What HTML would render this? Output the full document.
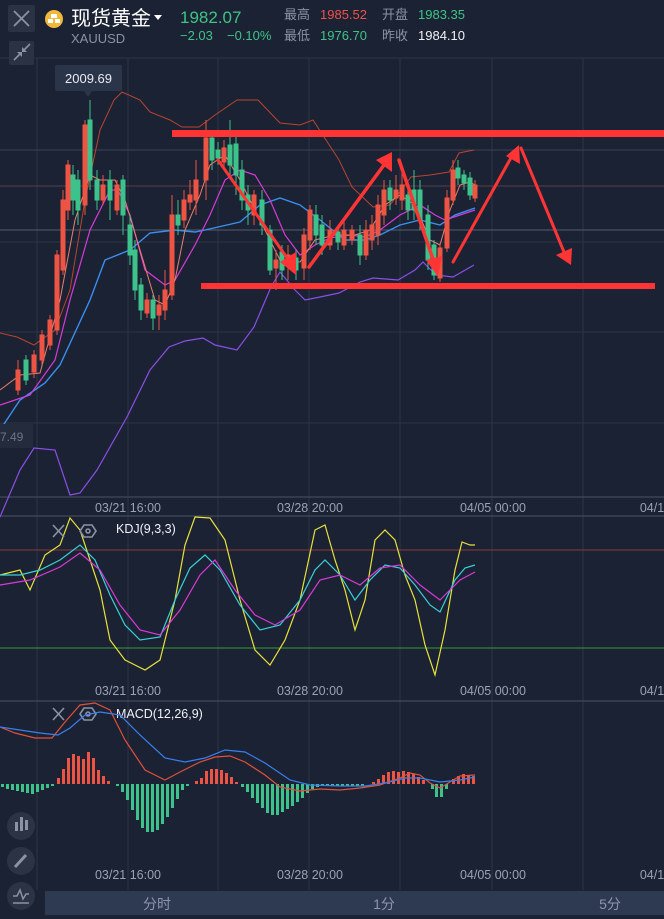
<!DOCTYPE html>
<html><head><meta charset="utf-8">
<style>
html,body{margin:0;padding:0;background:#1b2233;width:664px;height:919px;overflow:hidden;font-family:"Liberation Sans","Noto Sans CJK SC",sans-serif;}
svg{position:absolute;left:0;top:0}
</style></head><body>
<svg width="664" height="919" viewBox="0 0 664 919" xmlns="http://www.w3.org/2000/svg" font-family="Liberation Sans, Noto Sans CJK SC, sans-serif">
<rect width="664" height="919" fill="#1b2233"/>
<!-- grid -->
<g stroke="#2c3446" stroke-width="1">
<line x1="37" y1="58" x2="37" y2="890"/><line x1="128" y1="58" x2="128" y2="890"/><line x1="218" y1="58" x2="218" y2="890"/><line x1="309" y1="58" x2="309" y2="890"/><line x1="400" y1="58" x2="400" y2="890"/><line x1="492" y1="58" x2="492" y2="890"/><line x1="583" y1="58" x2="583" y2="890"/>
<line x1="0" y1="58" x2="664" y2="58"/><line x1="0" y1="150" x2="664" y2="150" stroke="#3a4254"/><line x1="0" y1="242" x2="664" y2="242"/><line x1="0" y1="332" x2="664" y2="332"/><line x1="0" y1="423" x2="664" y2="423"/>
</g>
<line x1="0" y1="230" x2="664" y2="230" stroke="#555d6e"/>
<line x1="0" y1="186" x2="664" y2="186" stroke="#5a3c44"/>
<line x1="0" y1="497" x2="664" y2="497" stroke="#4a5264"/>
<line x1="0" y1="516" x2="664" y2="516" stroke="#4a5264"/>
<line x1="0" y1="701" x2="664" y2="701" stroke="#4a5264"/>

<!-- bands & MAs -->
<g fill="none">
<polyline stroke="#b8452f" stroke-width="1" points="0,333 17,337 34,345 55,330 70,290 85,200 100,130 114,100 122,92 140,100 150,112 170,120 182,127 199,127 215,115 237,100 258,100 280,123 300,125 313,120 339,160 352,187 373,207 390,205 411,177 430,175 449,172 459,153 474,150"/>
<polyline stroke="#8b4fe6" stroke-width="1.2" points="0,517 20,470 34,448 55,450 70,495 80,493 97,470 127,417 150,370 169,347 185,341 203,338 215,345 237,350 254,327 271,287 280,272 295,290 305,300 320,297 339,293 360,282 373,278 398,280 415,270 423,262 436,275 453,277 474,265"/>
<polyline stroke="#3a8ff0" stroke-width="1.4" points="0,430 20,400 45,383 60,365 90,300 105,260 130,250 150,233 175,230 195,232 205,230 240,222 260,205 280,198 300,205 320,220 345,240 365,240 380,235 400,225 420,220 440,225 455,215 475,208"/>
<polyline stroke="#d83ad8" stroke-width="1.2" points="0,405 30,395 55,360 70,300 90,230 110,190 118,190 130,215 145,270 165,285 175,280 195,245 210,215 225,180 240,170 255,175 270,200 285,235 300,255 315,245 330,238 350,235 365,237 380,230 400,215 420,205 435,215 445,220 460,215 475,210"/>
<polyline stroke="#e8806e" stroke-width="1" points="0,390 20,375 40,373 60,300 75,220 90,175 100,180 115,180 125,200 140,250 155,300 165,305 175,280 185,230 200,195 210,165 225,155 240,180 260,220 280,260 300,262 315,240 335,235 355,235 370,230 385,205 400,195 415,205 430,240 440,245 450,210 460,185 470,182 475,185"/>
</g>

<!-- candles -->
<g stroke-width="1">
<g stroke="#ee5444" fill="#ee5444">
<line x1="18" y1="360" x2="18" y2="395"/><rect x="16" y="370" width="4" height="20"/>
<line x1="34" y1="350" x2="34" y2="378"/><rect x="32" y="355" width="4" height="17"/>
<line x1="42" y1="330" x2="42" y2="365"/><rect x="40" y="335" width="4" height="25"/>
<line x1="50" y1="315" x2="50" y2="350"/><rect x="48" y="320" width="4" height="25"/>
<line x1="57" y1="250" x2="57" y2="335"/><rect x="55" y="255" width="4" height="75"/>
<line x1="63" y1="190" x2="63" y2="275"/><rect x="61" y="200" width="4" height="70"/>
<line x1="68" y1="160" x2="68" y2="220"/><rect x="66" y="165" width="4" height="45"/>
<line x1="85" y1="120" x2="85" y2="215"/><rect x="83" y="125" width="4" height="80"/>
<line x1="103" y1="175" x2="103" y2="205"/><rect x="101" y="185" width="4" height="15"/>
<line x1="117" y1="180" x2="117" y2="215"/><rect x="115" y="185" width="4" height="25"/>
<line x1="147" y1="293" x2="147" y2="318"/><rect x="145" y="300" width="4" height="13"/>
<line x1="159" y1="295" x2="159" y2="330"/><rect x="157" y="305" width="4" height="10"/>
<line x1="165" y1="270" x2="165" y2="320"/><rect x="163" y="290" width="4" height="20"/>
<line x1="172" y1="195" x2="172" y2="300"/><rect x="170" y="215" width="4" height="80"/>
<line x1="184" y1="190" x2="184" y2="228"/><rect x="182" y="200" width="4" height="20"/>
<line x1="190" y1="180" x2="190" y2="210"/><rect x="188" y="195" width="4" height="7"/>
<line x1="196" y1="160" x2="196" y2="215"/><rect x="194" y="180" width="4" height="20"/>
<line x1="206" y1="120" x2="206" y2="200"/><rect x="204" y="138" width="4" height="42"/>
<line x1="224" y1="140" x2="224" y2="170"/><rect x="222" y="148" width="4" height="14"/>
<line x1="254" y1="190" x2="254" y2="225"/><rect x="252" y="195" width="4" height="20"/>
<line x1="276" y1="250" x2="276" y2="290"/><rect x="274" y="260" width="4" height="8"/>
<line x1="288" y1="245" x2="288" y2="280"/><rect x="286" y="255" width="4" height="10"/>
<line x1="304" y1="228" x2="304" y2="280"/><rect x="302" y="235" width="4" height="33"/>
<line x1="310" y1="205" x2="310" y2="250"/><rect x="308" y="210" width="4" height="30"/>
<line x1="330" y1="220" x2="330" y2="250"/><rect x="328" y="230" width="4" height="15"/>
<line x1="344" y1="220" x2="344" y2="250"/><rect x="342" y="230" width="4" height="15"/>
<line x1="352" y1="225" x2="352" y2="245"/><rect x="350" y="230" width="4" height="10"/>
<line x1="366" y1="220" x2="366" y2="260"/><rect x="364" y="230" width="4" height="25"/>
<line x1="372" y1="215" x2="372" y2="250"/><rect x="370" y="225" width="4" height="15"/>
<line x1="378" y1="195" x2="378" y2="245"/><rect x="376" y="205" width="4" height="30"/>
<line x1="384" y1="180" x2="384" y2="225"/><rect x="382" y="190" width="4" height="25"/>
<line x1="396" y1="175" x2="396" y2="205"/><rect x="394" y="190" width="4" height="8"/>
<line x1="402" y1="170" x2="402" y2="210"/><rect x="400" y="185" width="4" height="15"/>
<line x1="440" y1="243" x2="440" y2="282"/><rect x="438" y="248" width="4" height="30"/>
<line x1="447" y1="190" x2="447" y2="252"/><rect x="445" y="198" width="4" height="50"/>
<line x1="453" y1="160" x2="453" y2="205"/><rect x="451" y="170" width="4" height="30"/>
<line x1="475" y1="180" x2="475" y2="202"/><rect x="473" y="185" width="4" height="13"/>
</g>
<g stroke="#3cc28a" fill="#3cc28a">
<line x1="26" y1="355" x2="26" y2="385"/><rect x="24" y="360" width="4" height="20"/>
<line x1="73" y1="165" x2="73" y2="215"/><rect x="71" y="175" width="4" height="25"/>
<line x1="78" y1="170" x2="78" y2="225"/><rect x="76" y="180" width="4" height="30"/>
<line x1="90" y1="100" x2="90" y2="190"/><rect x="88" y="120" width="4" height="60"/>
<line x1="97" y1="170" x2="97" y2="210"/><rect x="95" y="180" width="4" height="20"/>
<line x1="110" y1="170" x2="110" y2="220"/><rect x="108" y="180" width="4" height="20"/>
<line x1="123" y1="175" x2="123" y2="235"/><rect x="121" y="180" width="4" height="35"/>
<line x1="130" y1="215" x2="130" y2="265"/><rect x="128" y="225" width="4" height="30"/>
<line x1="135" y1="240" x2="135" y2="300"/><rect x="133" y="250" width="4" height="40"/>
<line x1="141" y1="278" x2="141" y2="320"/><rect x="139" y="285" width="4" height="25"/>
<line x1="153" y1="295" x2="153" y2="330"/><rect x="151" y="300" width="4" height="18"/>
<line x1="178" y1="200" x2="178" y2="235"/><rect x="176" y="215" width="4" height="10"/>
<line x1="212" y1="130" x2="212" y2="170"/><rect x="210" y="138" width="4" height="22"/>
<line x1="218" y1="142" x2="218" y2="165"/><rect x="216" y="150" width="4" height="8"/>
<line x1="230" y1="120" x2="230" y2="175"/><rect x="228" y="145" width="4" height="20"/>
<line x1="236" y1="130" x2="236" y2="195"/><rect x="234" y="144" width="4" height="31"/>
<line x1="242" y1="160" x2="242" y2="210"/><rect x="240" y="170" width="4" height="30"/>
<line x1="248" y1="185" x2="248" y2="225"/><rect x="246" y="195" width="4" height="15"/>
<line x1="262" y1="190" x2="262" y2="235"/><rect x="260" y="200" width="4" height="25"/>
<line x1="270" y1="225" x2="270" y2="275"/><rect x="268" y="230" width="4" height="40"/>
<line x1="282" y1="245" x2="282" y2="280"/><rect x="280" y="252" width="4" height="18"/>
<line x1="296" y1="250" x2="296" y2="280"/><rect x="294" y="258" width="4" height="12"/>
<line x1="316" y1="205" x2="316" y2="245"/><rect x="314" y="215" width="4" height="20"/>
<line x1="322" y1="215" x2="322" y2="255"/><rect x="320" y="225" width="4" height="20"/>
<line x1="338" y1="225" x2="338" y2="250"/><rect x="336" y="232" width="4" height="10"/>
<line x1="360" y1="225" x2="360" y2="265"/><rect x="358" y="235" width="4" height="20"/>
<line x1="390" y1="180" x2="390" y2="210"/><rect x="388" y="188" width="4" height="12"/>
<line x1="408" y1="185" x2="408" y2="220"/><rect x="406" y="195" width="4" height="15"/>
<line x1="414" y1="170" x2="414" y2="220"/><rect x="412" y="190" width="4" height="20"/>
<line x1="420" y1="180" x2="420" y2="230"/><rect x="418" y="190" width="4" height="30"/>
<line x1="428" y1="205" x2="428" y2="270"/><rect x="426" y="215" width="4" height="45"/>
<line x1="434" y1="240" x2="434" y2="280"/><rect x="432" y="245" width="4" height="30"/>
<line x1="458" y1="160" x2="458" y2="185"/><rect x="456" y="168" width="4" height="10"/>
<line x1="464" y1="170" x2="464" y2="190"/><rect x="462" y="175" width="4" height="8"/>
<line x1="470" y1="172" x2="470" y2="200"/><rect x="468" y="178" width="4" height="17"/>
</g>
</g>

<!-- red annotations -->
<g fill="#ff3535" stroke="#ff3535">
<rect x="172" y="130" width="492" height="7" stroke="none"/>
<rect x="201" y="283" width="454" height="6" stroke="none"/>
<g stroke-width="4" stroke-linecap="round">
<line x1="218" y1="160" x2="290" y2="262" stroke-width="3"/>
<line x1="309" y1="267" x2="384" y2="165" stroke-width="3.5"/>
<line x1="399" y1="160" x2="434" y2="262" stroke-width="3.5"/>
<line x1="453" y1="262" x2="512" y2="156" stroke-width="3"/>
<line x1="521" y1="148" x2="564" y2="252" stroke-width="3"/>
</g>
<polygon points="296,275 280,262 296,252" stroke="none"/>
<polygon points="392,152 376,160 392,172" stroke="none"/>
<polygon points="438,277 426,260 442,256" stroke="none"/>
<polygon points="519,145 506,156 520,164" stroke="none"/>
<polygon points="571,265 556,255 572,248" stroke="none"/>
</g>

<!-- price tag -->
<rect x="55" y="65" width="67" height="26" rx="2" fill="#2b3549"/>
<polygon points="84,91 92,91 88,97" fill="#2b3549"/>
<text x="88.5" y="83" font-size="13" fill="#e8ecf2" text-anchor="middle">2009.69</text>
<rect x="0" y="424" width="33" height="24" fill="#232b3c"/>
<text x="0" y="441" font-size="12" fill="#6c7486">7.49</text>

<!-- axis labels -->
<g font-size="12.5" fill="#9aa2b4" text-anchor="middle">
<text x="128" y="512">03/21 16:00</text><text x="310" y="512">03/28 20:00</text><text x="493" y="512">04/05 00:00</text><text x="652" y="512">04/1</text>
<text x="128" y="695">03/21 16:00</text><text x="310" y="695">03/28 20:00</text><text x="493" y="695">04/05 00:00</text><text x="652" y="695">04/1</text>
<text x="128" y="879">03/21 16:00</text><text x="310" y="879">03/28 20:00</text><text x="493" y="879">04/05 00:00</text><text x="652" y="879">04/1</text>
</g>

<!-- KDJ -->
<line x1="0" y1="550" x2="664" y2="550" stroke="#8a3a3a"/>
<line x1="0" y1="648" x2="664" y2="648" stroke="#3a9a3a"/>
<g fill="none" stroke-width="1.2">
<polyline stroke="#e8e23a" points="0,575 20,570 30,590 45,555 60,545 70,518 80,530 90,560 100,590 110,640 125,660 145,670 160,660 175,600 185,545 195,517 210,518 225,540 240,600 255,650 270,665 285,640 300,600 315,530 325,525 335,560 345,590 355,630 365,600 375,540 385,530 395,540 405,575 415,600 425,645 435,675 445,630 455,570 462,542 470,545 475,545"/>
<polyline stroke="#3ad0d8" points="0,575 20,575 40,570 60,560 80,545 95,560 110,595 125,625 140,640 160,637 175,600 190,568 205,555 220,570 240,605 260,630 280,625 300,600 315,570 325,560 340,575 355,600 370,580 385,565 400,568 415,585 430,605 440,612 455,580 465,568 475,565"/>
<polyline stroke="#d83ad8" points="0,585 30,580 60,567 80,553 100,570 120,605 140,630 160,635 180,610 200,575 215,560 235,590 255,615 275,625 300,610 320,580 340,575 360,585 380,568 400,565 420,585 440,600 460,580 475,572"/>
</g>
<g stroke="#8a92a4" stroke-width="1.6" fill="none">
<line x1="53" y1="525" x2="64" y2="537"/><line x1="64" y1="525" x2="53" y2="537"/>
<polygon points="84,525 92,525 96,531 92,537 84,537 80,531"/><circle cx="88" cy="531" r="2"/>
<line x1="53" y1="708" x2="64" y2="720"/><line x1="64" y1="708" x2="53" y2="720"/>
<polygon points="84,708 92,708 96,714 92,720 84,720 80,714"/><circle cx="88" cy="714" r="2"/>
</g>
<text x="116" y="533" font-size="12.5" fill="#f0f2f6">KDJ(9,3,3)</text>
<text x="116" y="718" font-size="12.5" fill="#f0f2f6">MACD(12,26,9)</text>

<!-- MACD histogram -->
<g fill="#3cc28a">
<rect x="1" y="784" width="3" height="3"/><rect x="6" y="784" width="3" height="5"/><rect x="11" y="784" width="3" height="6"/><rect x="16" y="784" width="3" height="7"/><rect x="21" y="784" width="3" height="8"/><rect x="26" y="784" width="3" height="9"/><rect x="31" y="784" width="3" height="10"/><rect x="36" y="784" width="3" height="8"/><rect x="41" y="784" width="3" height="6"/><rect x="46" y="784" width="3" height="4"/><rect x="51" y="784" width="3" height="2"/>
<rect x="116" y="784" width="3" height="2"/><rect x="121" y="784" width="3" height="8"/><rect x="126" y="784" width="3" height="16"/><rect x="131" y="784" width="3" height="26"/><rect x="136" y="784" width="3" height="36"/><rect x="141" y="784" width="3" height="44"/><rect x="146" y="784" width="3" height="48"/><rect x="151" y="784" width="3" height="48"/><rect x="156" y="784" width="3" height="46"/><rect x="161" y="784" width="3" height="40"/><rect x="166" y="784" width="3" height="33"/><rect x="171" y="784" width="3" height="24"/><rect x="176" y="784" width="3" height="15"/><rect x="181" y="784" width="3" height="6"/><rect x="186" y="784" width="3" height="2"/>
<rect x="241" y="784" width="3" height="3"/><rect x="246" y="784" width="3" height="8"/><rect x="251" y="784" width="3" height="14"/><rect x="256" y="784" width="3" height="19"/><rect x="261" y="784" width="3" height="24"/><rect x="266" y="784" width="3" height="29"/><rect x="271" y="784" width="3" height="31"/><rect x="276" y="784" width="3" height="31"/><rect x="281" y="784" width="3" height="28"/><rect x="286" y="784" width="3" height="25"/><rect x="291" y="784" width="3" height="22"/><rect x="296" y="784" width="3" height="18"/><rect x="301" y="784" width="3" height="14"/><rect x="306" y="784" width="3" height="9"/><rect x="311" y="784" width="3" height="5"/><rect x="316" y="784" width="3" height="3"/><rect x="321" y="784" width="3" height="2"/><rect x="326" y="784" width="3" height="2"/><rect x="331" y="784" width="3" height="2"/><rect x="336" y="784" width="3" height="1.5"/><rect x="341" y="784" width="3" height="1.5"/><rect x="346" y="784" width="3" height="1.5"/><rect x="351" y="784" width="3" height="1.5"/><rect x="356" y="784" width="3" height="1.5"/><rect x="361" y="784" width="3" height="2"/>
<rect x="431" y="784" width="3" height="5"/><rect x="435" y="784" width="3" height="13"/><rect x="440" y="784" width="3" height="13"/><rect x="445" y="784" width="3" height="5"/>
</g>
<g fill="#ee5444">
<rect x="57" y="778" width="3" height="6"/><rect x="62" y="769" width="3" height="15"/><rect x="67" y="758" width="3" height="26"/><rect x="72" y="754" width="3" height="30"/><rect x="77" y="756" width="3" height="28"/><rect x="82" y="759" width="3" height="25"/><rect x="87" y="752" width="3" height="32"/><rect x="92" y="758" width="3" height="26"/><rect x="97" y="770" width="3" height="14"/><rect x="102" y="776" width="3" height="8"/><rect x="107" y="781" width="3" height="3"/>
<rect x="195" y="781" width="3" height="3"/><rect x="200" y="778" width="3" height="6"/><rect x="205" y="771" width="3" height="13"/><rect x="210" y="769" width="3" height="15"/><rect x="215" y="769" width="3" height="15"/><rect x="220" y="770" width="3" height="14"/><rect x="225" y="773" width="3" height="11"/><rect x="230" y="777" width="3" height="7"/><rect x="235" y="782" width="3" height="2"/>
<rect x="372" y="782" width="3" height="2"/><rect x="377" y="779" width="3" height="5"/><rect x="382" y="775" width="3" height="9"/><rect x="387" y="772" width="3" height="12"/><rect x="392" y="771" width="3" height="13"/><rect x="397" y="772" width="3" height="12"/><rect x="402" y="771" width="3" height="13"/><rect x="407" y="772" width="3" height="12"/><rect x="412" y="774" width="3" height="10"/><rect x="417" y="777" width="3" height="7"/><rect x="422" y="780" width="3" height="4"/>
<rect x="452" y="779" width="3" height="5"/><rect x="457" y="776" width="3" height="8"/><rect x="462" y="774" width="3" height="10"/><rect x="467" y="775" width="3" height="9"/><rect x="472" y="776" width="3" height="8"/>
</g>
<g fill="none" stroke-width="1.2">
<polyline stroke="#e0503a" points="0,727 15,733 35,738 52,738 65,722 80,705 95,703 110,710 125,740 145,770 165,780 180,772 200,762 215,757 230,756 245,762 265,775 280,787 300,791 320,789 340,790 360,788 380,785 400,778 410,773 420,775 430,783 440,788 450,782 460,776 475,775"/>
<polyline stroke="#3a7ff0" points="0,727 20,730 40,733 58,735 70,728 85,715 100,712 120,715 140,735 165,758 185,762 205,758 225,750 245,752 265,763 290,780 310,785 340,786 365,786 385,783 405,778 420,778 440,782 460,780 475,777"/>
</g>

<!-- left side tool circles -->
<g>
<circle cx="21" cy="826" r="14" fill="#2b3344"/>
<rect x="15" y="822" width="3" height="9" fill="#8a92a4"/><rect x="20" y="817" width="3" height="14" fill="#8a92a4"/><rect x="25" y="820" width="3" height="10" fill="#8a92a4"/>
<circle cx="21" cy="861" r="14" fill="#2b3344"/>
<line x1="15" y1="867" x2="26" y2="855" stroke="#8a92a4" stroke-width="3"/>
<circle cx="21" cy="896" r="14" fill="#2b3344"/>
<polyline points="13,896 17,896 20,890 23,899 26,894 29,894" fill="none" stroke="#8a92a4" stroke-width="1.5"/>
<line x1="13" y1="903" x2="29" y2="903" stroke="#8a92a4" stroke-width="1.5"/>
</g>

<!-- bottom tabs -->
<rect x="45" y="891" width="619" height="24" fill="#2e3a52"/>
<g font-size="14" fill="#8d96aa" text-anchor="middle">
<text x="157" y="909">分时</text><text x="384" y="909">1分</text><text x="610" y="909">5分</text>
</g>

<!-- header -->
<rect x="8" y="5" width="27" height="27" rx="2" fill="#2a3243"/>
<g stroke="#8a92a4" stroke-width="1.8"><line x1="14" y1="11" x2="29" y2="26"/><line x1="29" y1="11" x2="14" y2="26"/></g>
<rect x="9" y="41" width="25" height="24" rx="2" fill="#2a3243"/>
<g stroke="#8a92a4" stroke-width="1.6"><line x1="14" y1="60" x2="20" y2="54"/><line x1="24" y1="50" x2="30" y2="44"/></g>
<polygon points="17,52 22,52 22,57" fill="#8a92a4"/><polygon points="27,52 22,52 22,47" fill="#8a92a4"/>
<circle cx="54" cy="19" r="9" fill="#f0b93a"/>
<rect x="51" y="14" width="6" height="4" fill="#fff"/><rect x="48" y="19" width="5" height="4" fill="#fff"/><rect x="55" y="19" width="5" height="4" fill="#fff"/>
<text x="71" y="25" font-size="20" fill="#ffffff">现货黄金</text>
<polygon points="154,15 162,15 158,20" fill="#ffffff"/>
<text x="71" y="43" font-size="13" fill="#8a92a4">XAUUSD</text>
<text x="180" y="23" font-size="17" fill="#3ec487">1982.07</text>
<text x="180" y="40" font-size="13" fill="#3ec487">−2.03</text>
<text x="227" y="40" font-size="13" fill="#3ec487">−0.10%</text>
<g font-size="13">
<text x="284" y="19" fill="#8a92a4">最高</text><text x="320" y="19" fill="#f0524a">1985.52</text>
<text x="382" y="19" fill="#8a92a4">开盘</text><text x="418" y="19" fill="#3ec487">1983.35</text>
<text x="284" y="40" fill="#8a92a4">最低</text><text x="320" y="40" fill="#3ec487">1976.70</text>
<text x="382" y="40" fill="#8a92a4">昨收</text><text x="418" y="40" fill="#f0f2f6">1984.10</text>
</g>
</svg>
</body></html>
